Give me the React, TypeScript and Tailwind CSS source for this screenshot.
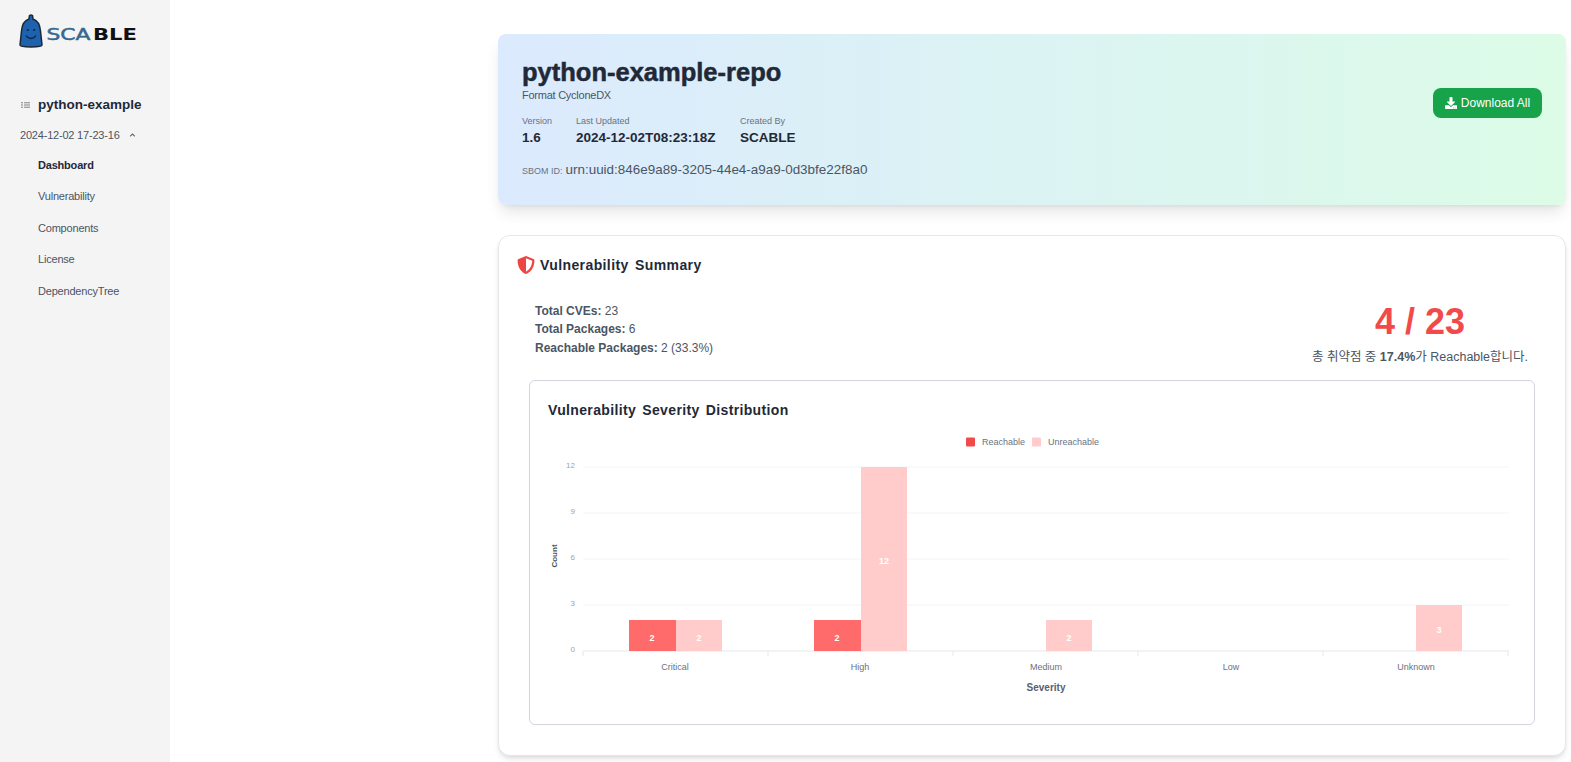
import React from 'react';
import { FaDownload, FaShieldAlt, FaChevronUp } from 'react-icons/fa';

const navItems = ['Dashboard', 'Vulnerability', 'Components', 'License', 'DependencyTree'];

// chart coordinates are relative to the svg box (530, 430)
const gridLines = [
  { label: '12', y: 37 },
  { label: '9', y: 83 },
  { label: '6', y: 129 },
  { label: '3', y: 175 },
  { label: '0', y: 221 },
];
const ticks = [53, 238, 423, 608, 793, 978];
const categories = [
  { label: 'Critical', x: 145 },
  { label: 'High', x: 330 },
  { label: 'Medium', x: 516 },
  { label: 'Low', x: 701 },
  { label: 'Unknown', x: 886 },
];
const bars = [
  { x: 99, w: 47, top: 190, fill: '#ff6b6b', value: 2 },
  { x: 146, w: 46, top: 190, fill: '#ffcccb', value: 2 },
  { x: 284, w: 47, top: 190, fill: '#ff6b6b', value: 2 },
  { x: 331, w: 46, top: 37, fill: '#ffcccb', value: 12 },
  { x: 516, w: 46, top: 190, fill: '#ffcccb', value: 2 },
  { x: 886, w: 46, top: 175, fill: '#ffcccb', value: 3 },
];

const Logo: React.FC = () => (
  <svg width="130" height="40" viewBox="0 0 130 40" className="block">
    <path d="M12 5 L12.5 1.5 Q14 0.5 15.5 1.5 L16 5 C20.5 6.5 23 11 23.5 17 L25 31 C25 33.5 3 33.5 3 31 L4.5 17 C5 11 7.5 6.5 12 5 Z" fill="#1d62ae" stroke="#1c2733" strokeWidth="1.5" />
    <circle cx="10.8" cy="16" r="1.1" fill="#12263f" />
    <circle cx="17.2" cy="16" r="1.1" fill="#12263f" />
    <path d="M9 21.5 C11.5 25.5 16.5 25.5 19 21.5" fill="none" stroke="#12263f" strokeWidth="1.3" />
    <text x="29.5" y="26" fontSize="16.5" textLength="44" lengthAdjust="spacingAndGlyphs" fill="#39688f" stroke="#39688f" strokeWidth="0.5" fontFamily="'DejaVu Sans', sans-serif">SCA</text>
    <text x="76" y="26" fontSize="16.5" fontWeight="700" textLength="44" lengthAdjust="spacingAndGlyphs" fill="#111111" fontFamily="'DejaVu Sans', sans-serif">BLE</text>
  </svg>
);

const SeverityChart: React.FC = () => (
  <svg width="1004" height="270" viewBox="0 0 1004 270" className="mt-[10px] block" fontFamily="'Liberation Sans', Arial, sans-serif">
    <rect x="436" y="7.5" width="9" height="9" rx="1" fill="#f24a4a" />
    <text x="452" y="15" fontSize="9" fill="#6b7280">Reachable</text>
    <rect x="502" y="7.5" width="9" height="9" rx="1" fill="#ffcccb" />
    <text x="518" y="15" fontSize="9" fill="#6b7280">Unreachable</text>

    {gridLines.map((line) => (
      <g key={line.label}>
        <line x1="53" x2="979" y1={line.y} y2={line.y} stroke={line.label === '0' ? '#e5e7eb' : '#f3f4f6'} />
        <text x="45" y={line.y + 1} fontSize="8" textAnchor="end" fill="#9ca3af">{line.label}</text>
      </g>
    ))}
    {ticks.map((x) => (
      <line key={x} x1={x} x2={x} y1="221" y2="226" stroke="#e5e7eb" />
    ))}
    {bars.map((bar) => (
      <g key={bar.x}>
        <rect x={bar.x} y={bar.top} width={bar.w} height={221 - bar.top} fill={bar.fill} />
        <text x={bar.x + 23} y={(bar.top + 221) / 2 + 5} fontSize="9" fontWeight="700" textAnchor="middle" fill="#ffffff">{bar.value}</text>
      </g>
    ))}
    {categories.map((c) => (
      <text key={c.label} x={c.x} y="240" fontSize="9" textAnchor="middle" fill="#6b7280">{c.label}</text>
    ))}
    <text x="516" y="261" fontSize="10" fontWeight="700" textAnchor="middle" fill="#566172">Severity</text>
    <text transform="translate(27 126) rotate(-90)" fontSize="8" fontWeight="700" textAnchor="middle" fill="#4b5563">Count</text>
  </svg>
);

export default function App() {
  return (
    <div className="flex h-screen overflow-hidden bg-white font-['Liberation_Sans','Noto_Sans_CJK_KR',Arial,sans-serif]">
      <aside className="w-[170px] shrink-0 bg-[#f4f4f5]">
        <div className="pl-[17px] pt-[14px]">
          <Logo />
        </div>
        <div className="mt-[40px] flex h-[22px] items-center pl-[21px]">
          <svg width="9" height="6" viewBox="0 0 9 6" className="block">
            <rect x="0" y="0" width="2" height="1.4" fill="#a3a3a3" />
            <rect x="3" y="0" width="6" height="1.4" fill="#a3a3a3" />
            <rect x="0" y="2.3" width="2" height="1.4" fill="#a3a3a3" />
            <rect x="3" y="2.3" width="6" height="1.4" fill="#a3a3a3" />
            <rect x="0" y="4.6" width="2" height="1.4" fill="#a3a3a3" />
            <rect x="3" y="4.6" width="6" height="1.4" fill="#a3a3a3" />
          </svg>
          <span className="ml-[8px] text-[13.5px] font-bold text-[#1f2937]">python-example</span>
        </div>
        <div className="mt-[11px] flex h-[16px] items-center pl-[20px] text-[11px] tracking-[-0.2px] text-[#4b5563]">
          2024-12-02 17-23-16
          <FaChevronUp className="ml-[9px] h-[6px] w-[7px] text-[#4b5563]" />
        </div>
        <nav className="mt-[6px]">
          <ul>
            {navItems.map((item, i) => (
              <li key={item} className={`flex h-[31.5px] items-center pl-[38px] text-[11px] tracking-[-0.2px] ${i === 0 ? 'font-bold text-[#1f2937]' : 'text-[#4b5563]'}`}>
                {item}
              </li>
            ))}
          </ul>
        </nav>
      </aside>

      <main className="flex-1 pl-[328px] pr-[5px] pt-[34px]">
        <section className="flex h-[171px] items-start justify-between rounded-lg bg-gradient-to-r from-[#dbeafe] to-[#dcfce7] pl-[24px] pr-[24px] pt-[24px] shadow-lg">
          <div>
            <h1 className="text-[25.5px] leading-[28px] font-extrabold text-[#1f2937] [-webkit-text-stroke:0.5px_#1f2937]">python-example-repo</h1>
            <p className="mt-[2px] text-[11px] leading-[14px] tracking-[-0.25px] text-[#4b5563]">Format CycloneDX</p>
            <div className="mt-[13px] flex">
              <div className="w-[54px]">
                <div className="text-[9px] leading-[12px] text-[#6b7280]">Version</div>
                <div className="mt-[3px] text-[13.5px] leading-[16px] font-bold text-[#1f2937]">1.6</div>
              </div>
              <div className="w-[164px]">
                <div className="text-[9px] leading-[12px] text-[#6b7280]">Last Updated</div>
                <div className="mt-[3px] text-[13.5px] leading-[16px] font-bold text-[#1f2937]">2024-12-02T08:23:18Z</div>
              </div>
              <div>
                <div className="text-[9px] leading-[12px] text-[#6b7280]">Created By</div>
                <div className="mt-[3px] text-[13.5px] leading-[16px] font-bold text-[#1f2937]">SCABLE</div>
              </div>
            </div>
            <div className="mt-[14px] flex items-baseline text-[#4b5563]">
              <span className="mr-[3px] text-[9px] text-[#6b7280]">SBOM ID:</span>
              <span className="text-[13.45px]">urn:uuid:846e9a89-3205-44e4-a9a9-0d3bfe22f8a0</span>
            </div>
          </div>
          <button className="mt-[30px] flex h-[30px] w-[109px] items-center justify-center gap-[4px] rounded-lg bg-[#16a34a] text-[12px] text-white">
            <FaDownload className="h-[12px] w-[12px]" />
            Download All
          </button>
        </section>

        <section className="mt-[30px] h-[521px] rounded-xl border border-[#e5e7eb] bg-white pl-[18px] pr-[5px] pt-[19px] shadow-md">
          <div className="flex h-[20px] items-center">
            <FaShieldAlt className="h-[18px] w-[18px] text-[#ef4444]" />
            <h2 className="ml-[5px] text-[14px] font-bold tracking-[0.4px] text-[#1f2937] [word-spacing:2px]">Vulnerability Summary</h2>
          </div>
          <div className="mt-[27px] flex justify-between pl-[18px] pr-[32px]">
            <div className="text-[12px] leading-[18.25px] text-[#4b5563]">
              <div><b>Total CVEs:</b> 23</div>
              <div><b>Total Packages:</b> 6</div>
              <div><b>Reachable Packages:</b> 2 (33.3%)</div>
            </div>
            <div className="flex flex-col items-center">
              <div className="text-[36px] leading-[40px] font-bold text-[#f24a4a]">4 / 23</div>
              <div className="mt-[7px] text-[12.5px] leading-[16px] text-[#4b5563]">총 취약점 중 <b>17.4%</b>가 Reachable합니다.</div>
            </div>
          </div>
          <div className="ml-[12px] mt-[15px] h-[345px] w-[1006px] rounded-md border border-[#d1d5db] pt-[19px]">
            <h3 className="pl-[18px] text-[14px] leading-[20px] font-bold tracking-[0.35px] text-[#1f2937] [word-spacing:2px]">Vulnerability Severity Distribution</h3>
            <SeverityChart />
          </div>
        </section>
      </main>
    </div>
  );
}
